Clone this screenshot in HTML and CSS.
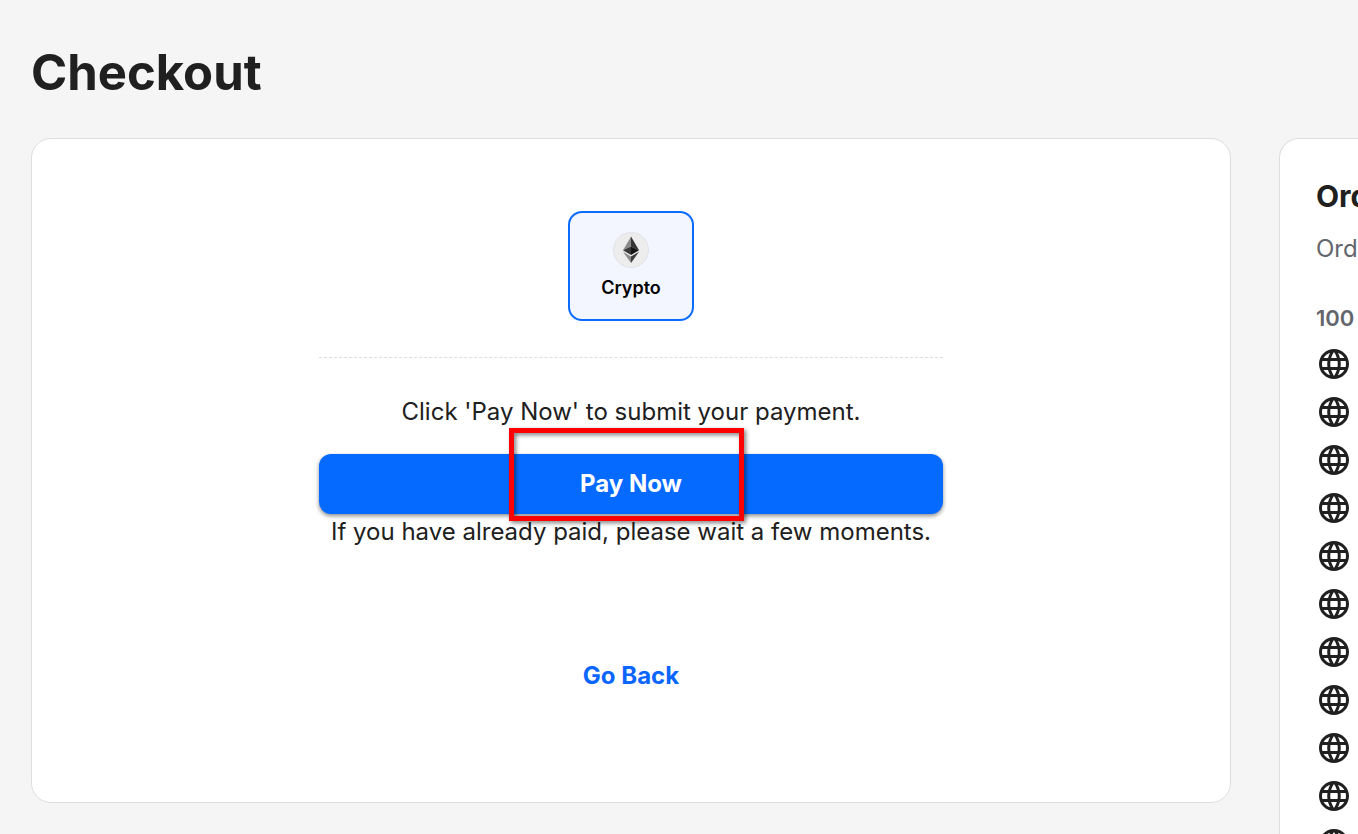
FILE: index.html
```
<!DOCTYPE html>
<html lang="en">
<head>
<meta charset="utf-8">
<title>Checkout</title>
<link rel="stylesheet" href="styles.css">
</head>
<body>
<svg class="sprite" aria-hidden="true">
  <symbol id="globe" viewBox="0 0 24 24"><path d="M11.99 2C6.47 2 2 6.48 2 12s4.47 10 9.99 10C17.52 22 22 17.52 22 12S17.52 2 11.99 2zm6.93 6h-2.95c-.32-1.25-.78-2.45-1.38-3.56 1.84.63 3.37 1.91 4.33 3.56zM12 4.04c.83 1.2 1.48 2.53 1.91 3.96h-3.82c.43-1.43 1.08-2.76 1.91-3.96zM4.26 14C4.1 13.36 4 12.69 4 12s.1-1.36.26-2h3.38c-.08.66-.14 1.32-.14 2 0 .68.06 1.34.14 2H4.26zm.82 2h2.95c.32 1.25.78 2.45 1.38 3.56-1.84-.63-3.37-1.9-4.33-3.56zm2.95-8H5.08c.96-1.66 2.49-2.93 4.33-3.56C8.81 5.55 8.35 6.75 8.03 8zM12 19.96c-.83-1.2-1.48-2.53-1.91-3.96h3.82c-.43 1.43-1.08 2.76-1.91 3.96zM14.34 14H9.66c-.09-.66-.16-1.32-.16-2 0-.68.07-1.35.16-2h4.68c.09.65.16 1.32.16 2 0 .68-.07 1.34-.16 2zm.25 5.56c.6-1.11 1.06-2.31 1.38-3.56h2.95c-.96 1.65-2.49 2.93-4.33 3.56zM16.36 14c.08-.66.14-1.32.14-2 0-.68-.06-1.34-.14-2h3.38c.16.64.26 1.31.26 2s-.1 1.36-.26 2h-3.38z"/></symbol>
</svg>
<div class="page">
  <h1 class="title">Checkout</h1>
  <div class="columns">
    <main class="card payment">
      <div class="payment-body">
        <button class="method" type="button" aria-pressed="true">
          <svg class="coin" viewBox="0 0 36 36" aria-hidden="true">
            <circle cx="18" cy="18" r="17.5" fill="#ededee" stroke="#e0e2ea"/>
            <path fill="#8a8a8a" d="M18 4.5 10 18.2 18 14.6z"/>
            <path fill="#343434" d="M18 4.5 26 18.2 18 14.6z"/>
            <path fill="#393939" d="M18 14.6 10 18.2 18 23z"/>
            <path fill="#141414" d="M18 14.6 26 18.2 18 23z"/>
            <path fill="#8c8c8c" d="M10 19.8 18 24.5V31z"/>
            <path fill="#3c3c3b" d="M26 19.8 18 24.5V31z"/>
          </svg>
          <span>Crypto</span>
        </button>
        <hr class="divider">
        <p class="note">Click 'Pay Now' to submit your payment.</p>
        <div class="pay-area">
          <button class="pay" type="button">Pay Now</button>
          <div class="highlight"></div>
        </div>
        <p class="note">If you have already paid, please wait a few moments.</p>
        <a class="back" href="#">Go Back</a>
      </div>
    </main>
    <aside class="card summary">
      <h2 class="summary-title">Ord</h2>
      <p class="summary-sub">Ord</p>
      <h3 class="summary-count">100</h3>
      <ul class="items">
        <li><svg class="globe"><use href="#globe"/></svg></li>
        <li><svg class="globe"><use href="#globe"/></svg></li>
        <li><svg class="globe"><use href="#globe"/></svg></li>
        <li><svg class="globe"><use href="#globe"/></svg></li>
        <li><svg class="globe"><use href="#globe"/></svg></li>
        <li><svg class="globe"><use href="#globe"/></svg></li>
        <li><svg class="globe"><use href="#globe"/></svg></li>
        <li><svg class="globe"><use href="#globe"/></svg></li>
        <li><svg class="globe"><use href="#globe"/></svg></li>
        <li><svg class="globe"><use href="#globe"/></svg></li>
        <li><svg class="globe"><use href="#globe"/></svg></li>
      </ul>
    </aside>
  </div>
</div>
</body>
</html>
```
FILE: styles.css
```
* { box-sizing: border-box; }
h1, h2, h3, p, ul { margin: 0; padding: 0; }
body {
  margin: 0;
  background: #f5f5f5;
  color: #202020;
  font-family: Inter, "Liberation Sans", sans-serif;
  font-size: 24px;
  line-height: 36px;
}
.sprite { display: none; }
.page {
  height: 100vh;
  overflow: hidden;
  padding: 44px 0 0 31px;
}
.title {
  margin-bottom: 36px;
  font-size: 49px;
  line-height: 58px;
  font-weight: 700;
}
.columns {
  display: grid;
  grid-template-columns: minmax(0, 1fr) 79px;
  gap: 48px;
  align-items: start;
}
.card {
  background: #fff;
  border: 1px solid #dedede;
  border-radius: 20px;
}
.payment { padding: 72px 24px 108px; }
.payment-body {
  display: flex;
  flex-direction: column;
  align-items: center;
  max-width: 624px;
  margin: 0 auto;
}
.method {
  display: flex;
  flex-direction: column;
  align-items: center;
  justify-content: center;
  gap: 8px;
  width: 126px;
  height: 110px;
  padding: 0;
  background: #f3f6fe;
  border: 2px solid #0b6bff;
  border-radius: 14px;
  color: #000;
  font: 600 18px/24px Inter, "Liberation Sans", sans-serif;
}
.coin { width: 36px; height: 36px; }
.divider {
  width: 100%;
  margin: 36px 0;
  border: 0;
  border-top: 1px dashed #dedede;
}
.note {
  font-weight: 370;
  text-align: center;
}
.pay-area {
  position: relative;
  width: 100%;
  margin-top: 24px;
}
.pay {
  display: block;
  width: 100%;
  height: 60px;
  border: 0;
  border-radius: 12px;
  background: #056aff;
  box-shadow: 0 2px 4px rgba(0, 0, 0, 0.45);
  color: #fff;
  font: 700 24px/36px Inter, "Liberation Sans", sans-serif;
}
.highlight {
  position: absolute;
  top: -26px;
  bottom: -7px;
  left: 190px;
  width: 235px;
  border: 5px solid #f00;
  filter: drop-shadow(2px 2px 2px rgba(0, 0, 0, 0.5));
  pointer-events: none;
}
.back {
  margin-top: 108px;
  color: #0b66ff;
  font-weight: 700;
  text-decoration: none;
}
.summary {
  padding: 36px 0 36px 36px;
  border-right: 0;
  border-radius: 20px 0 0 0;
  white-space: nowrap;
}
.summary-title {
  font-size: 30px;
  line-height: 42px;
  font-weight: 700;
}
.summary-sub {
  margin-top: 14px;
  color: #62656c;
  font-weight: 370;
}
.summary-count {
  margin-top: 33px;
  color: #62656c;
  font-size: 22px;
  font-weight: 600;
}
.items {
  margin-top: 4px;
  list-style: none;
}
.items li {
  display: flex;
  align-items: center;
  height: 48px;
}
.globe {
  width: 36px;
  height: 36px;
  fill: #202020;
}
```
